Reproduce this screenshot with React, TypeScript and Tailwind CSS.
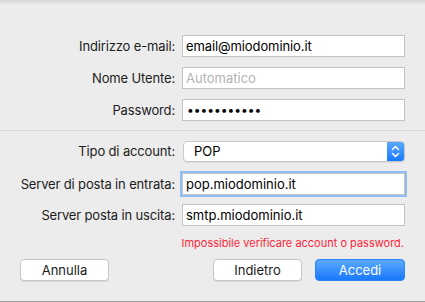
import React from "react";

const LABEL = "w-[176px] shrink-0 text-right text-[#1c1c1c] pr-[1px] tracking-[-0.15px]";
const BOX = "ml-[6px] w-[223px] h-[22px] bg-white border border-[#c3c3c3] px-[3px] text-black outline-none";
const FIELD = `${BOX} text-[13px] font-['Inter',sans-serif]`;

function Row({ label, children, className = "" }: { label: string; children: React.ReactNode; className?: string }) {
  return (
    <div className={`flex items-center h-[22px] ${className}`}>
      <label className={LABEL}>{label}</label>
      {children}
    </div>
  );
}

export default function App() {
  return (
    <div className="w-[425px] h-[302px] bg-[#ececec] flex flex-col overflow-hidden font-['Inter',sans-serif] text-[13px] leading-none">
      {/* top shadow */}
      <div className="h-[5px] shrink-0 bg-gradient-to-b from-[#d6d6d6] to-[#ececec]" />

      <Row label="Indirizzo e-mail:" className="mt-[30px]">
        <input className={`${FIELD} tracking-[-0.1px]`} readOnly value="email@miodominio.it" />
      </Row>
      <Row label="Nome Utente:" className="mt-[10px]">
        <input className={`${FIELD} placeholder:text-[#b4b4b4]`} readOnly placeholder="Automatico" />
      </Row>
      <Row label="Password:" className="mt-[10px]">
        <div className={`${BOX} flex items-center pl-[4px] text-[12px] tracking-[0px] text-[#222]`}>
          •••••••••••
        </div>
      </Row>

      <div className="mt-[9px] h-px shrink-0 bg-[#d8d8d8]" />

      {/* account type select */}
      <div className="flex items-center h-[21px] mt-[10px]">
        <label className={LABEL}>Tipo di account:</label>
        <div className="ml-[7px] w-[222px] h-[21px] flex bg-white border border-[#c8c8c8] rounded-[4px] overflow-hidden shadow-[0_1px_0_rgba(0,0,0,0.06)]">
          <span className="flex-1 pl-[10px] flex items-center text-black">POP</span>
          <span className="w-[17px] h-full flex items-center justify-center bg-gradient-to-b from-[#5aa9fd] to-[#1478fb]">
            <svg width="9" height="13" viewBox="0 0 9 13" fill="none" stroke="white" strokeWidth="1.5" strokeLinecap="round" strokeLinejoin="round">
              <path d="M1.5 4.5 L4.5 1.5 L7.5 4.5" />
              <path d="M1.5 8.5 L4.5 11.5 L7.5 8.5" />
            </svg>
          </span>
        </div>
      </div>

      <Row label="Server di posta in entrata:" className="mt-[11px]">
        <input
          className={`${FIELD} border-[#78aee8] shadow-[0_0_0_2px_#8ec0f3]`}
          readOnly
          value="pop.miodominio.it"
        />
      </Row>
      <Row label="Server posta in uscita:" className="mt-[9px]">
        <input className={FIELD} readOnly value="smtp.miodominio.it" />
      </Row>

      <p className="mt-[10px] pr-[21px] text-right text-[11px] leading-[14px] text-[#fc1f3a]">
        Impossibile verificare account o password.
      </p>

      <div className="mt-[9px] flex items-center pl-[20px]">
        <button className="w-[89px] h-[22px] bg-white border border-[#c6c6c6] rounded-[4px] shadow-[0_1px_0_rgba(0,0,0,0.08)] text-[#1c1c1c]">
          Annulla
        </button>
        <button className="ml-[104px] w-[89px] h-[22px] bg-white border border-[#c6c6c6] rounded-[4px] shadow-[0_1px_0_rgba(0,0,0,0.08)] text-[#1c1c1c]">
          Indietro
        </button>
        <button className="ml-[13px] w-[90px] h-[22px] rounded-[4px] bg-gradient-to-b from-[#5aa9fd] to-[#1679fb] text-white border border-[#2c84f5]">
          Accedi
        </button>
      </div>

      <div className="mt-auto h-px shrink-0 bg-[#9f9f9f]" />
    </div>
  );
}
